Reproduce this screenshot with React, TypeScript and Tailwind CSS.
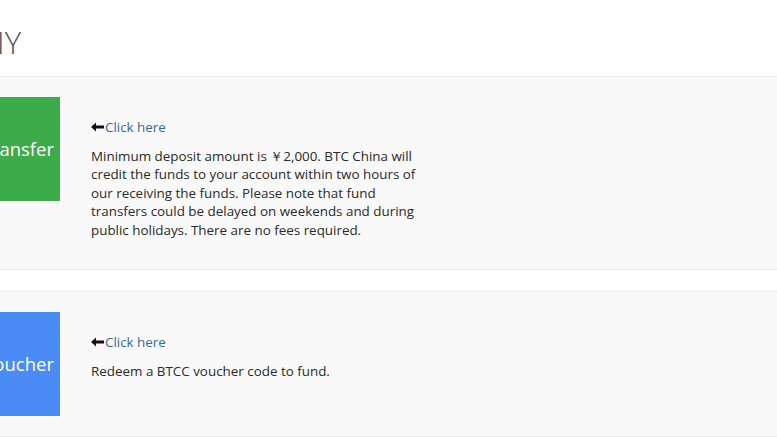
import React from "react";

function Arrow() {
  return (
    <svg width="13" height="10" viewBox="0 0 13 10" className="mr-[1px] inline-block">
      <path d="M0 5 L5 0.5 L5 3.5 L13 3.5 L13 6.5 L5 6.5 L5 9.5 Z" fill="#111" />
    </svg>
  );
}

function Row({ color, label, children }: { color: string; label: string; children: React.ReactNode }) {
  return (
    <div className="flex border-y border-[#ececec] bg-[#f9f9f9] p-[20px] pl-0">
      <div
        className={`flex h-[104px] w-[60px] shrink-0 items-center justify-end overflow-hidden whitespace-nowrap pr-[6px] text-[18.5px] text-white ${color}`}
      >
        {label}
      </div>
      <div className="ml-[31px] w-[336px] pt-[21px] text-[13.4px] leading-[18.5px] text-[#2a2a2a]">
        <div className="mb-[10px] flex items-center">
          <Arrow />
          <span className="text-[#36699c]">Click here</span>
        </div>
        <p className="mb-[10px]">{children}</p>
      </div>
    </div>
  );
}

export default function App() {
  return (
    <div className="h-[437px] w-[777px] overflow-hidden bg-white" style={{ fontFamily: '"Open Sans", sans-serif' }}>
      <div className="flex h-[76px] items-start pt-[22px]">
        <div className="flex w-[22px] justify-end overflow-hidden whitespace-nowrap">
          <h1 className="pr-[1px] text-[31px] font-light leading-[40px] text-[#555]">DEPOSIT CNY</h1>
        </div>
      </div>
      <Row color="bg-[#3cab4a]" label="Bank Transfer">
        Minimum deposit amount is ￥2,000. BTC China will credit the funds to your account within two hours of our
        receiving the funds. Please note that fund transfers could be delayed on weekends and during public holidays.
        There are no fees required.
      </Row>
      <div className="h-[21px]" />
      <Row color="bg-[#4a8bf5]" label="BTCC Voucher">
        Redeem a BTCC voucher code to fund.
      </Row>
    </div>
  );
}
